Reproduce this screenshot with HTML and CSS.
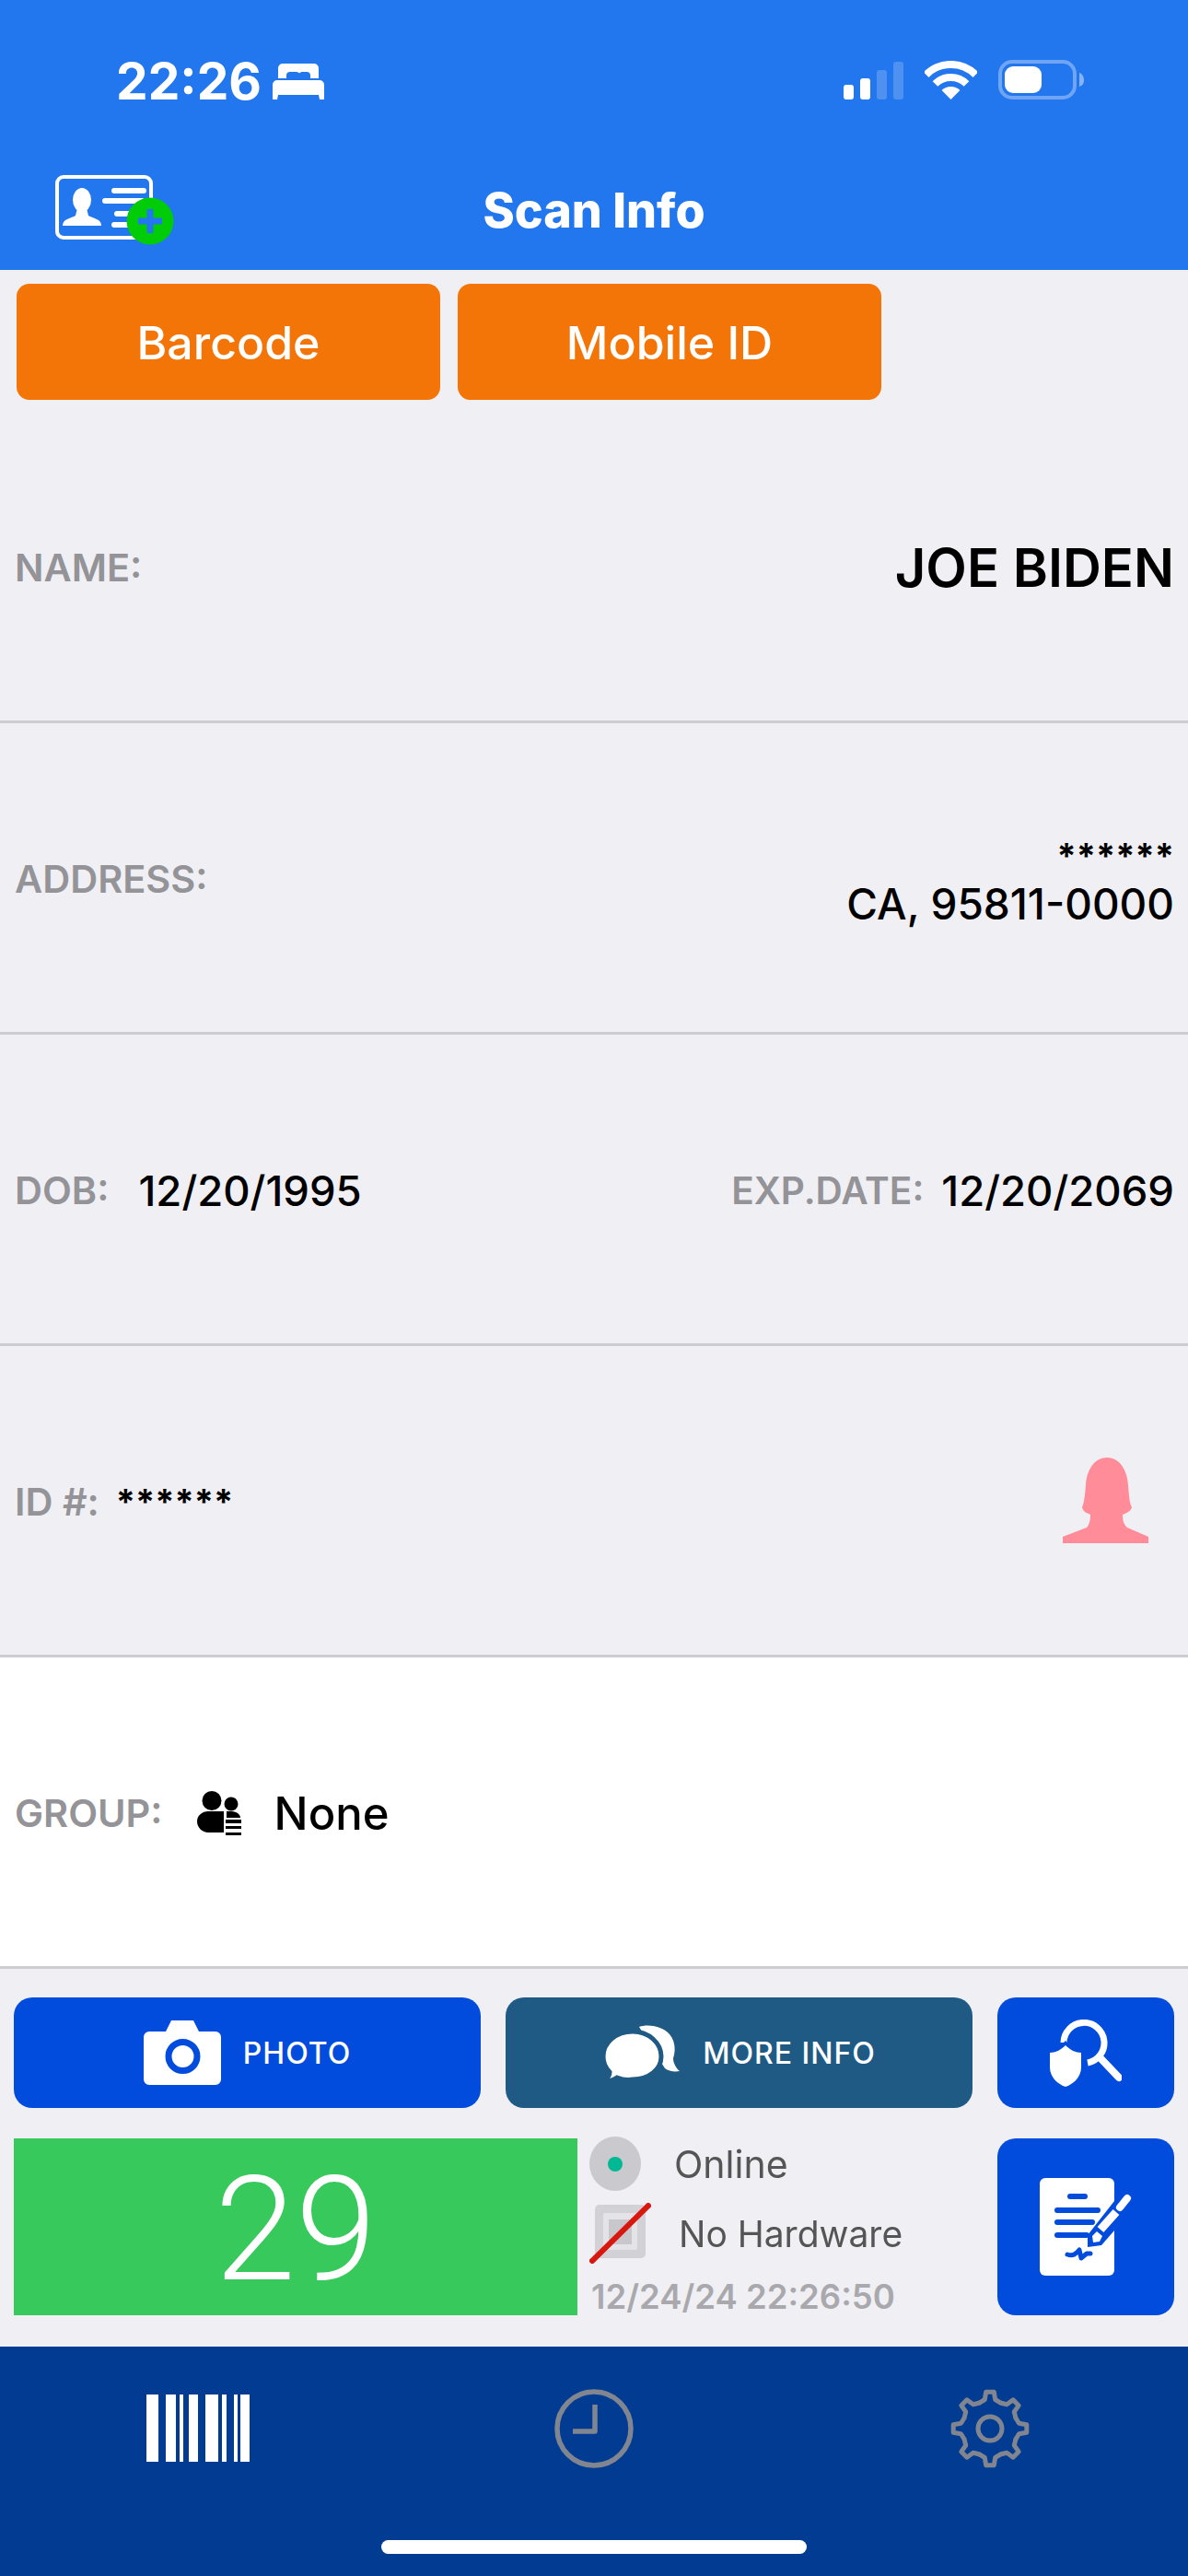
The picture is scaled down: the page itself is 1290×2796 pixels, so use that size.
FILE: index.html
```html
<!DOCTYPE html>
<html lang="en">
<head>
    <meta charset="UTF-8">
    <meta name="viewport" content="width=device-width, initial-scale=1.0">
    <title>Scan Info</title>
    <link rel="stylesheet" href="styles.css">
</head>
<body>
    <header class="top">
        <div class="status-bar">
            <div class="clock">
                <span>22:26</span>
                <svg class="bed" width="56" height="39" viewBox="0 0 56 39">
                    <path d="M6 16V5a5 5 0 0 1 5-5h34a5 5 0 0 1 5 5v11H41v-3a4 4 0 0 0-4-4h-5a4 4 0 0 0-3 1.500 4 4 0 0 0-3-1.500h-7a4 4 0 0 0-4 4v3z" fill="#fff"/>
                    <path d="M5 18h46a5 5 0 0 1 5 5v16h-5l-1-5H6l-1 5H0V23a5 5 0 0 1 5-5z" fill="#fff"/>
                </svg>
            </div>
            <div class="status-icons">
                <svg width="65" height="41" viewBox="0 0 65 41">
                    <rect x="0" y="25" width="11" height="16" rx="3" fill="#fff"/>
                    <rect x="18" y="18" width="11" height="23" rx="3" fill="#fff"/>
                    <rect x="36" y="9" width="11" height="32" rx="3" fill="#fff" opacity=".2"/>
                    <rect x="54" y="0" width="11" height="41" rx="3" fill="#fff" opacity=".2"/>
                </svg>
                <svg width="57" height="42" viewBox="0 0 57 42">
                    <path d="M1.600 15.100A38 38 0 0 1 55.400 15.100" fill="none" stroke="#fff" stroke-width="8"/>
                    <path d="M11.500 25A24 24 0 0 1 45.500 25" fill="none" stroke="#fff" stroke-width="8"/>
                    <path d="M28.500 42L18.600 32.100A14 14 0 0 1 38.400 32.100z" fill="#fff"/>
                </svg>
                <svg width="94" height="43" viewBox="0 0 94 43">
                    <rect x="2" y="2" width="81" height="39" rx="13" fill="none" stroke="#fff" stroke-width="4" opacity=".35"/>
                    <rect x="7" y="7" width="40" height="29" rx="9" fill="#fff"/>
                    <path d="M88 14c3 1 5 4 5 8s-2 6-5 7z" fill="#fff" opacity=".45"/>
                </svg>
            </div>
        </div>
        <div class="nav-bar">
            <svg width="130" height="76" viewBox="0 0 130 76">
                <rect x="2" y="2" width="102" height="66" rx="7" fill="none" stroke="#fff" stroke-width="4"/>
                <ellipse cx="29" cy="27" rx="10" ry="13" fill="#fff"/>
                <path d="M24 36h10l2 8c4 3 14 3 14 11H8c0-8 10-8 14-11z" fill="#fff"/>
                <path d="M64 17h32M54 28h40M67 42h30M64 54h30" stroke="#fff" stroke-width="6" stroke-linecap="round"/>
                <circle cx="103" cy="50" r="25.500" fill="#00cc08"/>
                <path d="M103 37v26M90 50h26" stroke="#2276ee" stroke-width="7"/>
            </svg>
            <h1 class="title">Scan Info</h1>
        </div>
    </header>

    <main class="scan">
        <div class="scan-types">
            <button class="type-btn">Barcode</button>
            <button class="type-btn">Mobile ID</button>
        </div>

        <div class="row">
            <span class="label">NAME:</span>
            <span class="name">JOE BIDEN</span>
        </div>
        <div class="row">
            <span class="label">ADDRESS:</span>
            <div class="address">
                <span class="stars">******</span>
                <span class="value value-address">CA, 95811-0000</span>
            </div>
        </div>
        <div class="row">
            <div class="pair">
                <span class="label">DOB:</span>
                <span class="value">12/20/1995</span>
            </div>
            <div class="pair pair-exp">
                <span class="label label-exp">EXP.DATE:</span>
                <span class="value">12/20/2069</span>
            </div>
        </div>
        <div class="row">
            <div class="pair pair-id">
                <span class="label">ID #:</span>
                <span class="stars stars-id">******</span>
            </div>
            <svg class="silhouette" width="93" height="93" viewBox="0 0 93 93">
                <path d="M48 0C34 0 26 14 25 30c-1 12-2 20-4 24 1 5 5 6 9 8 0 8-2 12-4 14L0 86v7h93v-7L70 76c-3-3-5-6-5-14 5-2 9-4 10-8-3-6-3-14-4-24C70 14 62 0 48 0z" fill="#ff8c98"/>
            </svg>
        </div>
        <div class="row row-group">
            <span class="label">GROUP:</span>
            <svg class="group-icon" width="49" height="48" viewBox="0 0 49 48">
                <circle cx="16" cy="10.500" r="10.500" fill="#000"/>
                <circle cx="37" cy="14" r="7.500" fill="#000"/>
                <path d="M0 33c0-7 6-11 12-11h17v23H12C6 45 0 40 0 33z" fill="#000"/>
                <path d="M32 22h5c5 0 10 3 10 7H32zM31 31h17v4H31zM31 38h17v3H31zM31 45h17v3H31z" fill="#000"/>
            </svg>
            <span class="group-name">None</span>
        </div>

        <div class="bottom">
            <div class="bottom-row">
                <button class="action action-photo">
                    <svg width="84" height="70" viewBox="0 0 84 70">
                        <path d="M6 12h18l6-12h24l6 12h18a6 6 0 0 1 6 6v46a6 6 0 0 1-6 6H6a6 6 0 0 1-6-6V18a6 6 0 0 1 6-6z" fill="#fff"/>
                        <circle cx="42.500" cy="39" r="15.500" fill="none" stroke="#024cdd" stroke-width="7"/>
                    </svg>
                    PHOTO
                </button>
                <button class="action action-more">
                    <svg width="85" height="61" viewBox="0 0 85 61">
                        <path d="M40 2c8-3 24-2 33 8 6 7 7 17 4 26 0 5 3 11 7 14-6 1-12 0-16-3z" fill="#fff"/>
                        <path d="M33 7C15 7 1 19 1 34c0 7 3 13 7 17 0 3-2 7-7 10 6 0 11-1 15-4 5 2 11 3 17 2 18 0 31-11 31-25S51 7 33 7z" fill="#fff" stroke="#1f5a85" stroke-width="5"/>
                    </svg>
                    MORE INFO
                </button>
                <button class="action action-square">
                    <svg width="78" height="73" viewBox="0 0 78 73">
                        <path d="M15 25A22 22 0 1 1 41 47" fill="none" stroke="#fff" stroke-width="7"/>
                        <path d="M55 42l20 21" stroke="#fff" stroke-width="8" stroke-linecap="round"/>
                        <path d="M17 28c-5 5-11 8-17 8v16c0 10 8 18 17 21 9-3 17-11 17-21V36c-6 0-12-3-17-8z" fill="#fff" stroke="#024cdd" stroke-width="7" paint-order="stroke"/>
                    </svg>
                </button>
            </div>
            <div class="bottom-row bottom-row-tall">
                <div class="counter">29</div>
                <div class="device">
                    <div class="device-line">
                        <svg width="56" height="59" viewBox="0 0 56 59">
                            <ellipse cx="28" cy="29.500" rx="28" ry="29.500" fill="#c9c9ce"/>
                            <circle cx="28" cy="30" r="8" fill="#00b894"/>
                        </svg>
                        <span class="device-text device-online">Online</span>
                    </div>
                    <div class="device-line">
                        <svg class="device-chip" width="67" height="66" viewBox="0 0 67 66">
                            <rect x="6" y="2" width="55" height="58" rx="5" fill="#d2d2d6"/>
                            <rect x="15" y="11" width="37" height="40" rx="3" fill="#e4e4e8"/>
                            <rect x="21" y="18" width="25" height="27" fill="#c8c8cc"/>
                            <path d="M1 65L66 1" stroke="#d8170e" stroke-width="6"/>
                        </svg>
                        <span class="device-text device-hw">No Hardware</span>
                    </div>
                    <span class="device-time">12/24/24 22:26:50</span>
                </div>
                <button class="action action-square">
                    <svg width="100" height="106" viewBox="0 0 100 106">
                        <rect width="81" height="106" rx="6" fill="#fff"/>
                        <path d="M33 20h16M19 35h44M19 48h38M19 62h32" stroke="#024cdd" stroke-width="6" stroke-linecap="round"/>
                        <path d="M30 83c6 2 9 0 13-5l2 9 6-5h4" fill="none" stroke="#024cdd" stroke-width="5" stroke-linejoin="round" stroke-linecap="round"/>
                        <path d="M52 75V62L81 25V57L67 73z" fill="#024cdd"/>
                        <path d="M81 25h4v22L81 57z" fill="#024cdd"/>
                        <path d="M66 56L83 37" stroke="#fff" stroke-width="9"/>
                        <path d="M87 32l8-10" stroke="#fff" stroke-width="8" stroke-linecap="round"/>
                        <path d="M58 70l-1-7 5-5 6 5-3 6z" fill="#fff"/>
                    </svg>
                </button>
            </div>
        </div>
    </main>

    <nav class="tab-bar">
        <div class="tabs">
            <svg width="112" height="73" viewBox="0 0 112 73">
                <path d="M0 0h13v73H0zM21 0h11v73H21zM36 0h4v73h-4zM46 0h10v73H46zM64 0h14v73H64zM82 0h5v73h-5zM95 0h4v73h-4zM102 0h10v73h-10z" fill="#fff"/>
            </svg>
            <svg width="86" height="86" viewBox="0 0 86 86">
                <circle cx="43" cy="43" r="40" fill="none" stroke="#80858f" stroke-width="5.500"/>
                <path d="M44 17v29H20" fill="none" stroke="#80858f" stroke-width="5.500" stroke-linejoin="round"/>
            </svg>
            <svg width="86" height="86" viewBox="0 0 86 86">
                <defs>
                    <path id="gear-tooth" d="M31 15.400L37.300 11.500 38.700 3.200H47.300L48.700 11.500 55 15.400" fill="none" stroke="#80858f" stroke-width="5" stroke-linejoin="round"/>
                </defs>
                <use href="#gear-tooth"/>
                <use href="#gear-tooth" transform="rotate(45 43 43)"/>
                <use href="#gear-tooth" transform="rotate(90 43 43)"/>
                <use href="#gear-tooth" transform="rotate(135 43 43)"/>
                <use href="#gear-tooth" transform="rotate(180 43 43)"/>
                <use href="#gear-tooth" transform="rotate(225 43 43)"/>
                <use href="#gear-tooth" transform="rotate(270 43 43)"/>
                <use href="#gear-tooth" transform="rotate(315 43 43)"/>
                <circle cx="43" cy="43" r="13" fill="none" stroke="#80858f" stroke-width="5"/>
            </svg>
        </div>
        <div class="home-bar"></div>
    </nav>
</body>
</html>
```

FILE: styles.css
```css
* {
    box-sizing: border-box;
}

body {
    font-family: 'Inter', 'Liberation Sans', sans-serif;
    background-color: #efeff4;
    display: flex;
    flex-direction: column;
    width: 1290px;
    height: 2796px;
    margin: 0;
    overflow: hidden;
    color: #000;
}

button {
    font-family: inherit;
    border: 0;
    color: #fff;
    padding: 0;
}

svg {
    display: block;
    flex-shrink: 0;
}

/* header */
.top {
    height: 293px;
    background-color: #2276ee;
    color: #fff;
}

.status-bar {
    height: 163px;
    padding: 66px 112px 0 126px;
    display: flex;
    justify-content: space-between;
    align-items: flex-start;
}

.clock {
    display: flex;
    align-items: center;
    gap: 12px;
    height: 44px;
    font-size: 55px;
    font-weight: 700;
    line-height: 44px;
}

.status-icons {
    display: flex;
    align-items: flex-end;
    gap: 23px;
    margin-top: -1px;
}

.nav-bar {
    height: 130px;
    padding: 0 60px;
    display: grid;
    grid-template-columns: 1fr auto 1fr;
    align-items: center;
}

.title {
    margin: 0;
    font-size: 52px;
    font-weight: 800;
}

/* scan info */
.scan {
    flex: 1;
    display: flex;
    flex-direction: column;
}

.scan-types {
    height: 154px;
    padding: 15px 0 0 18px;
    display: flex;
    align-items: flex-start;
    gap: 19px;
}

.type-btn {
    width: 460px;
    height: 126px;
    padding-top: 2px;
    border-radius: 14px;
    background-color: #f47507;
    font-size: 50px;
    font-weight: 500;
}

.row {
    height: 338px;
    padding: 3px 15px 0 16px;
    border-bottom: 3px solid #cdcdd1;
    display: flex;
    justify-content: space-between;
    align-items: center;
}

.label {
    font-size: 41.500px;
    font-weight: 600;
    color: #939398;
}

.label-exp {
    font-size: 40.500px;
}

.name {
    font-size: 58px;
    font-weight: 600;
}

.value {
    font-size: 45.500px;
    font-weight: 500;
}

.value-address {
    font-size: 46px;
}

.stars {
    font-size: 38px;
    font-weight: 700;
}

.address {
    padding-top: 7px;
    display: flex;
    flex-direction: column;
    align-items: flex-end;
    gap: 1px;
}

.pair {
    display: flex;
    align-items: center;
    gap: 32px;
}

.pair-exp {
    gap: 19px;
}

.pair-id {
    gap: 18px;
}

.stars-id {
    margin-top: -1px;
}

.silhouette {
    margin-right: 28px;
    margin-top: -4px;
}

.row-group {
    justify-content: flex-start;
    background-color: #fff;
}

.group-icon {
    margin-left: 37px;
    margin-top: -1px;
}

.group-name {
    margin-left: 35px;
    font-size: 49px;
    font-weight: 500;
}

/* actions */
.bottom {
    padding: 31px 15px 0;
    display: flex;
    flex-direction: column;
    gap: 33px;
}

.bottom-row {
    display: flex;
    gap: 27px;
    height: 120px;
}

.bottom-row-tall {
    height: 192px;
    gap: 0;
}

.action {
    width: 507px;
    border-radius: 20px;
    display: flex;
    align-items: center;
    justify-content: center;
    gap: 24px;
    font-size: 32px;
    font-weight: 500;
    letter-spacing: 1px;
}

.action-photo {
    background-color: #024cdd;
}

.action-more {
    background-color: #1f5a85;
}

.action-square {
    width: 192px;
    background-color: #024cdd;
}

.counter {
    width: 612px;
    background-color: #37c95c;
    color: #fff;
    font-family: 'Roboto', sans-serif;
    font-size: 158px;
    font-weight: 300;
    text-align: center;
    line-height: 198px;
    overflow: hidden;
}

.device {
    flex: 1;
    margin-top: -2px;
    padding-left: 13px;
    display: flex;
    flex-direction: column;
}

.device-line {
    display: flex;
    align-items: center;
}

.device-line + .device-line {
    margin-top: 13px;
}

.device-chip {
    filter: blur(.5px);
}

.device-text {
    font-size: 41px;
    color: #555;
    filter: blur(.6px);
}

.device-online {
    margin-left: 36px;
}

.device-hw {
    margin-left: 30px;
    font-size: 39px;
}

.device-time {
    margin-top: 14px;
    padding-left: 2px;
    font-size: 36.500px;
    font-weight: 600;
    color: #a9a9ad;
}

/* tab bar */
.tab-bar {
    height: 249px;
    background-color: #023c92;
}

.tabs {
    height: 210px;
    padding-top: 46px;
    display: grid;
    grid-template-columns: repeat(3, 430px);
    justify-items: center;
    align-items: start;
}

.tabs svg:first-child {
    margin-top: 6px;
}

.home-bar {
    width: 462px;
    height: 15px;
    margin: 0 auto;
    border-radius: 8px;
    background-color: #fff;
}
```
